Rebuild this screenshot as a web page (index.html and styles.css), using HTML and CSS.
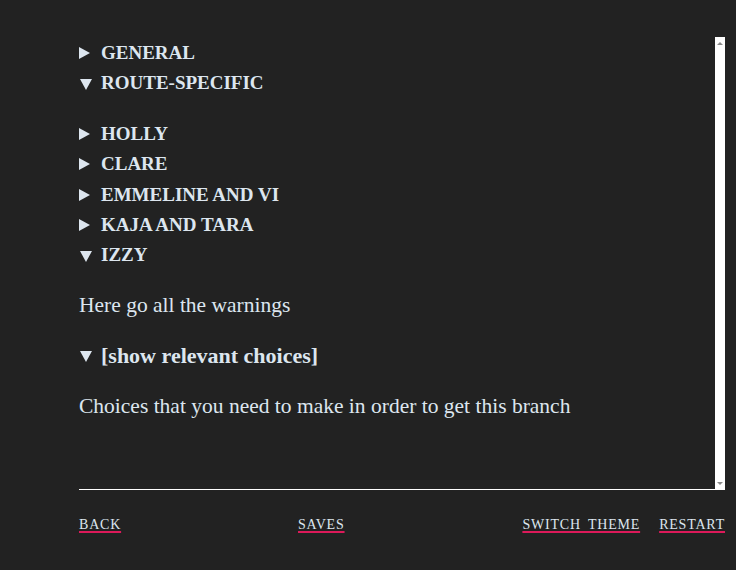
FILE: index.html
```html
<!DOCTYPE html>
<html lang="en">
<head>
<meta charset="utf-8">
<title>Content warnings</title>
<link rel="stylesheet" href="styles.css">
</head>
<body>
<div class="page">
  <div class="panel">
    <div class="content">
      <details class="sec"><summary>GENERAL</summary></details>
      <details class="sec" open>
        <summary>ROUTE-SPECIFIC</summary>
        <div class="routes">
          <details class="sec"><summary>HOLLY</summary></details>
          <details class="sec"><summary>CLARE</summary></details>
          <details class="sec"><summary>EMMELINE AND VI</summary></details>
          <details class="sec"><summary>KAJA AND TARA</summary></details>
          <details class="sec" open>
            <summary>IZZY</summary>
            <p class="text">Here go all the warnings</p>
            <details class="sec sub" open>
              <summary>[show relevant choices]</summary>
              <p class="text">Choices that you need to make in order to get this branch</p>
            </details>
          </details>
        </div>
      </details>
    </div>
    <div class="scrollbar">
      <span class="arrow up"></span>
      <span class="arrow down"></span>
    </div>
  </div>
  <nav class="menu">
    <a href="#" class="link first">BACK</a>
    <a href="#" class="link">SAVES</a>
    <div class="right">
      <a href="#" class="link">SWITCH THEME</a>
      <a href="#" class="link">RESTART</a>
    </div>
  </nav>
</div>
</body>
</html>
```

FILE: styles.css
```css
html, body {
  margin: 0;
  padding: 0;
  background: #222222;
}
body {
  color: #dde6ef;
  font-family: "Liberation Serif", "Times New Roman", serif;
  font-size: 19px;
  line-height: 30.4px;
}
.page {
  width: 646px;
  margin-left: 79px;
  padding-top: 38px;
}
.panel {
  display: flex;
  height: 452px;
}
.content {
  flex: 1;
  border-bottom: 1px solid #ffffff;
  overflow: hidden;
}
.scrollbar {
  width: 10px;
  margin-top: -1px;
  background: #ffffff;
  display: flex;
  flex-direction: column;
  justify-content: space-between;
  align-items: center;
  padding: 5px 0 5px;
}
.arrow {
  width: 0;
  height: 0;
  border-left: 3.5px solid transparent;
  border-right: 3.5px solid transparent;
}
.arrow.up { border-bottom: 3px solid #8a8a8a; }
.arrow.down { border-top: 3px solid #8a8a8a; }

.sec > summary {
  list-style: none;
  display: flex;
  align-items: center;
  font-weight: bold;
  cursor: pointer;
}
.sec > summary::-webkit-details-marker { display: none; }
.sec > summary::before {
  content: "";
  flex: none;
  width: 0;
  height: 0;
  margin: 0 11px 0 0;
  border-top: 6px solid transparent;
  border-bottom: 6px solid transparent;
  border-left: 11px solid #dde6ef;
}
.sec[open] > summary::before {
  margin: 1px 9px 0 1px;
  border-left: 6px solid transparent;
  border-right: 6px solid transparent;
  border-top: 11px solid #dde6ef;
  border-bottom: 0;
}
.sub > summary {
  font-size: 22px;
}
.routes {
  margin-top: 20px;
}
.text {
  margin: 20px 0;
  font-size: 21.5px;
  line-height: 28px;
  padding: 0 0 2.4px;
}
.menu {
  display: flex;
  align-items: baseline;
  margin-top: 25px;
  font-size: 14px;
  line-height: 20px;
}
.link {
  color: #dde6ef;
  text-decoration: underline;
  text-decoration-color: #dc1a5a;
  text-decoration-thickness: 2px;
  text-underline-offset: 2px;
  letter-spacing: 0.8px;
  word-spacing: 3px;
}
.first {
  flex: 0 0 219px;
}
.first + .link {
  flex: none;
}
.right {
  margin-left: auto;
  display: flex;
  gap: 19px;
}
```
